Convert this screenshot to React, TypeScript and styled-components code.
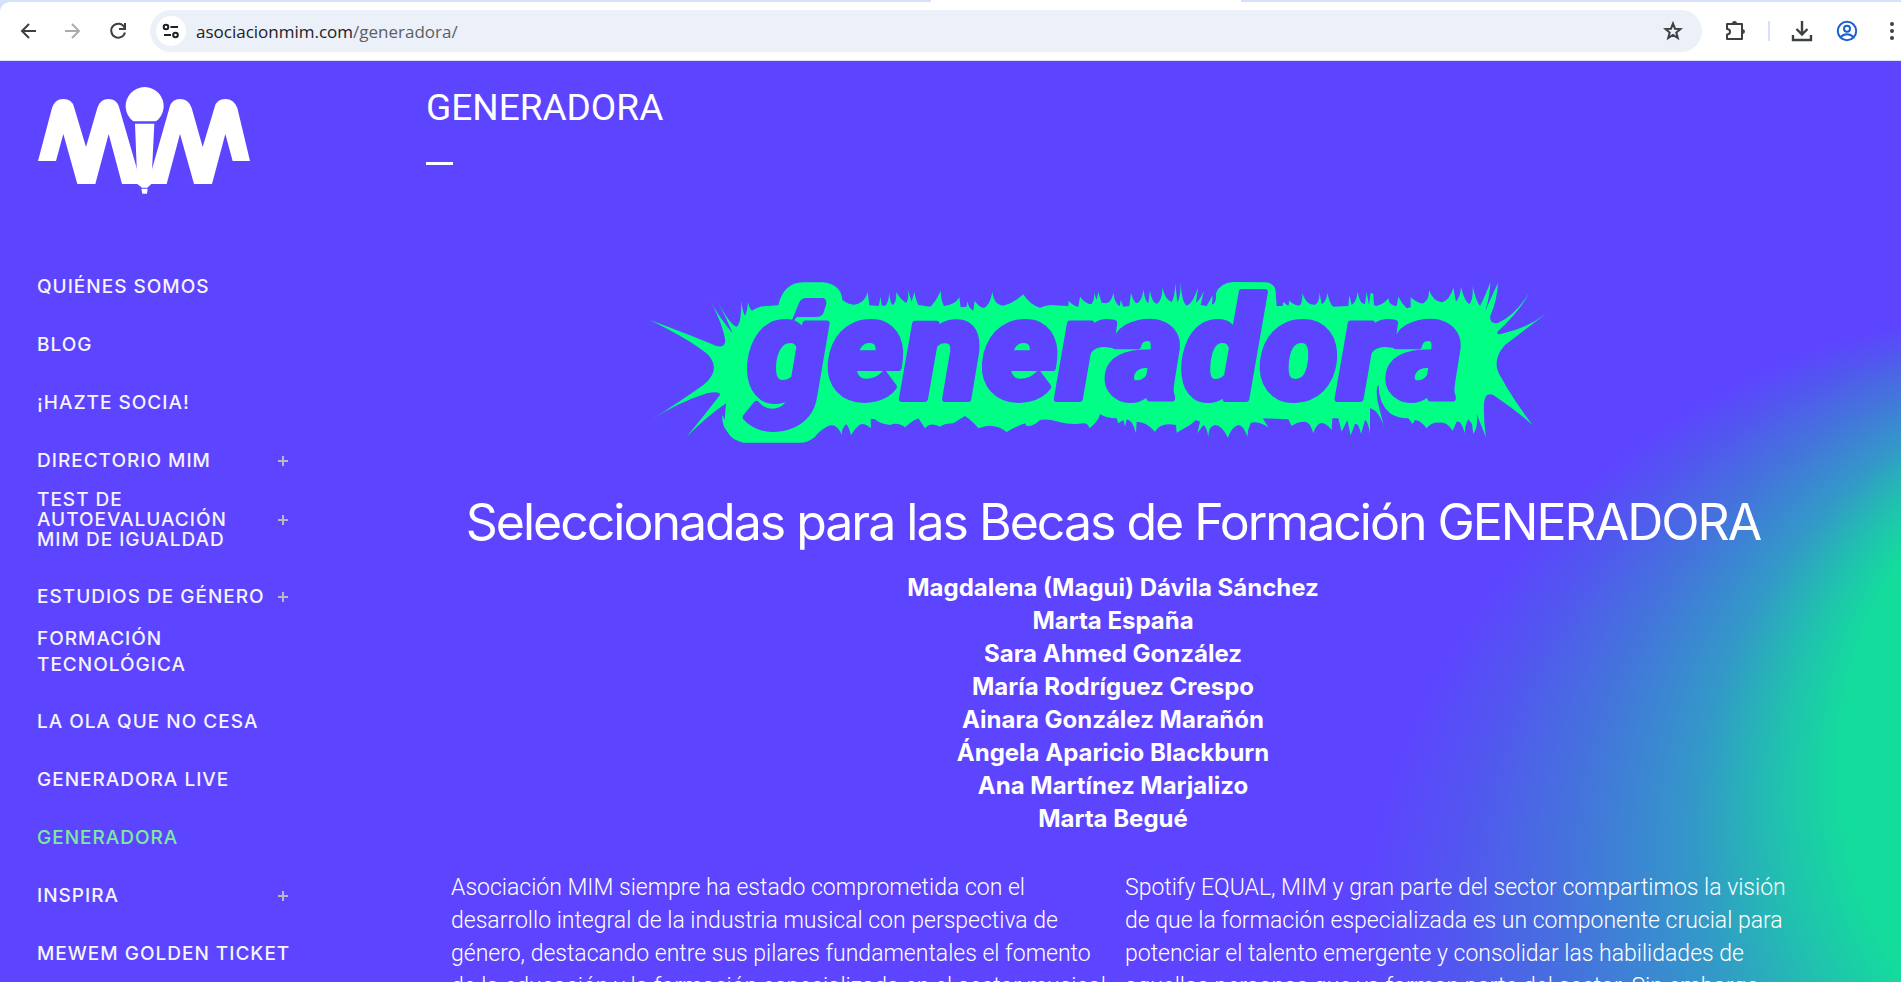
import React from "react";
import styled, { createGlobalStyle } from "styled-components";

const violet = "#5d44ff";
const mint = "#00ff85";

const GlobalStyle = createGlobalStyle`
  *, *::before, *::after { box-sizing: border-box; }
  html, body, #root { height: 100%; }
  body { margin: 0; overflow: hidden; background: ${violet}; color: #fff; font-family: Inter, "Liberation Sans", sans-serif; }
`;

const Screen = styled.div`
  display: flex;
  flex-direction: column;
  height: 100vh;
  overflow: hidden;
`;

const Chrome = styled.header`
  flex: none;
  background: #d6e2fb;
`;

const ActiveTab = styled.div`
  width: 310px;
  height: 2px;
  margin-left: 49%;
  background: #fff;
`;

const Toolbar = styled.div`
  height: 59px;
  display: flex;
  align-items: center;
  margin-right: -14px;
  padding: 0 0 1px 14px;
  background: #fff;
  border-bottom: 1px solid #dfe3f5;
  border-radius: 10px 0 0 0;
`;

const ToolButton = styled.button<{ $tone?: string; $width: number }>`
  flex: none;
  width: ${(p) => p.$width}px;
  height: 40px;
  padding: 0;
  border: 0;
  background: none;
  color: ${(p) => p.$tone ?? "#3c4043"};
  display: flex;
  align-items: center;
  justify-content: center;
`;

const AddressBar = styled.div`
  flex: 1;
  height: 42px;
  margin-left: 17px;
  padding: 0 6px;
  display: flex;
  align-items: center;
  border-radius: 21px;
  background: #ebf0f9;
`;

const SiteButton = styled.button`
  width: 30px;
  height: 30px;
  padding: 0;
  border: 0;
  border-radius: 50%;
  background: #fff;
  color: #1f2023;
  display: flex;
  align-items: center;
  justify-content: center;
`;

const Url = styled.a`
  flex: 1;
  margin-left: 10px;
  padding-top: 2px;
  font: 17px/24px "Open Sans", "Noto Sans", sans-serif;
  color: #202124;
  text-decoration: none;
  span { color: #5b5f66; }
`;

const Divider = styled.span`
  width: 2px;
  height: 20px;
  margin-right: 9px;
  background: #d6e2fb;
`;

const Site = styled.div`
  position: relative;
  flex: 1;
  min-height: 0;
  display: flex;
  overflow: hidden;
`;

const Glow = styled.svg`
  position: absolute;
  top: 0;
  right: 0;
  width: 601px;
  height: 921px;
`;

const Sidebar = styled.aside`
  position: relative;
  flex: none;
  width: 426px;
  padding: 26px 136px 0 37px;
`;

const Logo = styled.a`
  display: block;
  width: 214px;
  height: 108px;
  margin-bottom: 63px;
  svg { display: block; }
`;

const NavList = styled.ul`
  margin: 0;
  padding: 0;
  list-style: none;
`;

const NavItem = styled.li<{ $kind?: "tight" | "loose" }>`
  display: flex;
  justify-content: space-between;
  align-items: center;
  padding: ${(p) => (p.$kind === "tight" ? "0 0 18px" : p.$kind === "loose" ? "0 0 15px" : "19px 0")};
  line-height: ${(p) => (p.$kind === "loose" ? 26 : 20)}px;
`;

const NavLink = styled.a<{ $active?: boolean }>`
  font-size: 19px;
  font-weight: 500;
  letter-spacing: 1px;
  color: ${(p) => (p.$active ? "#7eea9f" : "#f6f4ff")};
  text-decoration: none;
  white-space: pre;
`;

const Expand = styled.button`
  flex: none;
  width: 14px;
  height: 14px;
  padding: 2px;
  border: 0;
  background: none;
  svg { display: block; }
`;

const Main = styled.main`
  position: relative;
  flex: 1;
  min-width: 0;
`;

const Title = styled.h1`
  margin: 0;
  padding-top: 25px;
  font: 400 37px/44px Roboto, sans-serif;
`;

const Rule = styled.div`
  width: 27px;
  height: 3px;
  margin-top: 32px;
  background: #fff;
`;

const Banner = styled.svg`
  display: block;
  width: 920px;
  height: 180px;
  margin: 105px 0 0 214px;
  overflow: visible;
`;

const Wordmark = styled.text`
  font: italic 900 430px Roboto, sans-serif;
  fill: ${violet};
  stroke: ${violet};
  stroke-width: 18px;
  stroke-linejoin: round;
`;

const Content = styled.section`
  padding: 0 126px 0 25px;
`;

const Heading = styled.h2`
  margin: 39px 0 16px;
  font-size: 50px;
  line-height: 66px;
  font-weight: 400;
  letter-spacing: -2px;
  text-align: center;
  white-space: nowrap;
`;

const Names = styled.ul`
  margin: 0 0 36px;
  padding: 0;
  list-style: none;
  text-align: center;
  font-size: 24px;
  line-height: 33px;
  font-weight: 700;
`;

const Columns = styled.div`
  display: grid;
  grid-template-columns: repeat(2, minmax(0, 1fr));
  column-gap: 24px;
`;

const Paragraph = styled.p`
  margin: 0;
  font: 300 23px/33px Roboto, sans-serif;
  white-space: pre;
`;

type Item = { label: string; more?: boolean; active?: boolean; kind?: "tight" | "loose" };

const items: Item[] = [
  { label: "QUIÉNES SOMOS" },
  { label: "BLOG" },
  { label: "¡HAZTE SOCIA!" },
  { label: "DIRECTORIO MIM", more: true },
  { label: "TEST DE\nAUTOEVALUACIÓN\nMIM DE IGUALDAD", more: true, kind: "tight" },
  { label: "ESTUDIOS DE GÉNERO", more: true },
  { label: "FORMACIÓN\nTECNOLÓGICA", kind: "loose" },
  { label: "LA OLA QUE NO CESA" },
  { label: "GENERADORA LIVE" },
  { label: "GENERADORA", active: true },
  { label: "INSPIRA", more: true },
  { label: "MEWEM GOLDEN TICKET" },
];

const names = [
  "Magdalena (Magui) Dávila Sánchez",
  "Marta España",
  "Sara Ahmed González",
  "María Rodríguez Crespo",
  "Ainara González Marañón",
  "Ángela Aparicio Blackburn",
  "Ana Martínez Marjalizo",
  "Marta Begué",
];

const left = `Asociación MIM siempre ha estado comprometida con el
desarrollo integral de la industria musical con perspectiva de
género, destacando entre sus pilares fundamentales el fomento
de la educación y la formación especializada en el sector musical`;

const right = `Spotify EQUAL, MIM y gran parte del sector compartimos la visión
de que la formación especializada es un componente crucial para
potenciar el talento emergente y consolidar las habilidades de
aquellas personas que ya forman parte del sector. Sin embargo`;

const splash =
  "M30 150Q150 195 215 222Q250 240 256 215Q250 165 208 88Q235 140 278 190Q262 150 232 92Q270 165 290 170Q305 160 303 92Q308 125 315 137Q322 125 324 97Q330 120 336 122Q360 108 378 108L415 106Q430 38 490 37L550 37Q605 45 607 90Q640 115 665 95Q678 85 683 66L688 106L716 108L722 80L725 106L735 108Q745 100 748 68Q750 95 757 105Q770 100 769 66Q785 95 800 98Q808 85 803 58L815 95L823 66Q828 92 835 105L870 110Q885 100 902 62Q902 90 912 108Q945 105 958 82L962 112L980 110L982 92Q985 115 1000 122L1004 92Q1015 110 1032 114Q1050 105 1057 66Q1062 105 1090 107Q1120 100 1150 73Q1170 105 1200 113Q1225 103 1240 106L1285 108L1286 92Q1300 108 1315 110L1320 80Q1340 105 1355 102Q1365 90 1362 68L1370 90L1375 66L1385 98L1400 100Q1415 95 1420 68Q1425 105 1440 108L1442 90L1450 110L1468 108L1473 68Q1480 98 1492 100Q1508 90 1510 58Q1515 95 1525 100L1530 62Q1535 95 1550 102Q1568 90 1567 52Q1575 90 1595 97Q1605 80 1606 40L1612 98Q1622 80 1622 38Q1625 95 1640 107Q1660 100 1674 52L1668 98Q1680 90 1692 62L1682 105L1700 108L1718 76L1716 104Q1730 100 1728 70Q1740 38 1780 36L1880 37Q1906 42 1907 65L1910 108L1928 108L1930 95L1945 108L1948 92Q1965 108 1980 106Q1988 95 1987 70Q2000 108 2025 104Q2040 95 2038 66L2045 102Q2060 95 2062 68Q2070 105 2080 110L2125 108L2128 75L2135 105Q2150 95 2153 65Q2160 105 2175 102L2180 66L2187 105L2192 68L2200 72L2202 106L2210 108Q2235 100 2245 85Q2248 108 2270 108L2275 80Q2285 100 2300 115L2312 112L2312 82Q2335 102 2350 100Q2368 90 2367 60Q2380 95 2405 97Q2430 90 2440 53L2448 95Q2460 85 2463 52Q2475 98 2488 102Q2500 90 2498 48Q2508 95 2520 108Q2535 80 2551 37Q2550 80 2535 125Q2550 90 2574 38Q2572 90 2550 140Q2552 165 2575 158Q2620 140 2667 70Q2635 130 2572 185Q2570 198 2590 190Q2660 175 2720 130Q2640 190 2595 225Q2550 275 2585 325Q2620 390 2678 465Q2620 415 2560 375Q2535 365 2532 400Q2530 450 2538 502L2510 432Q2515 470 2500 492L2496 462L2485 448Q2475 465 2474 490Q2465 450 2450 455L2438 482Q2420 455 2400 458Q2375 455 2360 475Q2340 450 2325 450L2318 462L2305 445Q2270 445 2250 430Q2215 400 2216 345Q2206 350 2213 395L2232 470Q2215 420 2190 415L2190 492Q2185 455 2175 450L2163 492Q2155 455 2145 462L2132 496L2122 450L2105 485L2095 445L2077 445L2075 480Q2055 455 2040 460Q2025 470 2020 490Q2010 455 1995 455Q1970 455 1955 468L1945 448L1868 445L1885 472Q1850 450 1832 460Q1822 480 1822 500Q1810 465 1795 465Q1775 470 1764 503Q1745 465 1725 465Q1705 470 1705 500Q1700 470 1690 465L1672 490L1680 455L1668 450L1650 465L1610 488L1608 465Q1560 455 1545 485Q1520 455 1490 455L1488 490Q1478 450 1460 448L1455 470L1450 450L1435 460L1430 445Q1400 445 1380 432Q1375 455 1348 475Q1345 460 1330 460Q1290 465 1255 455Q1220 445 1200 450Q1180 470 1160 468L1155 460Q1125 470 1100 486Q1060 455 1015 475Q1000 455 975 438Q955 450 940 460Q915 460 900 470Q870 455 855 475L835 445Q820 450 795 472Q775 455 750 465Q715 460 705 448L692 446L693 475Q670 455 658 465Q645 475 633 495Q625 465 618 463Q605 475 605 495Q590 455 560 470Q535 485 525 500Q505 518 480 518L310 518Q275 510 265 490L252 470Q244 445 248 435L254 450L258 400Q200 440 140 500Q190 440 240 375Q240 362 200 370Q110 400 32 450Q120 395 190 345Q245 300 205 255Q160 215 30 150Z";

const line = { fill: "none", stroke: "currentColor", strokeWidth: 2 } as const;

export default function App() {
  return (
    <Screen>
      <GlobalStyle />
      <Chrome>
        <ActiveTab />
        <Toolbar>
          <ToolButton aria-label="Atrás" $width={28}>
            <svg width="18" height="18" viewBox="0 0 18 18" {...line}><path d="M17 9H3M10 2L3 9l7 7" /></svg>
          </ToolButton>
          <ToolButton aria-label="Adelante" $tone="#a9abae" $width={61}>
            <svg width="18" height="18" viewBox="0 0 18 18" {...line}><path d="M1 9h14M8 2l7 7-7 7" /></svg>
          </ToolButton>
          <ToolButton aria-label="Recargar" $width={30}>
            <svg width="18" height="18" viewBox="0 0 18 18" {...line}><path d="M15.500 5.500A7 7 0 1 0 16 10.500M16 1v6h-6" /></svg>
          </ToolButton>
          <AddressBar>
            <SiteButton aria-label="Información del sitio">
              <svg width="18" height="18" viewBox="0 0 18 18" {...line}><circle cx="4" cy="5" r="2.300" /><path d="M8.500 5H16M2 13h7" /><circle cx="13.500" cy="13" r="2.300" /></svg>
            </SiteButton>
            <Url href="#">asociacionmim.com<span>/generadora/</span></Url>
            <ToolButton aria-label="Favoritos" $width={46}>
              <svg width="20" height="20" viewBox="0 0 20 20" {...line}><path d="M10 2.500l2 5.200 5.600.3-4.300 3.500 1.500 5.500L10 14l-4.800 3 1.500-5.500L2.400 8l5.600-.3z" /></svg>
            </ToolButton>
          </AddressBar>
          <ToolButton aria-label="Extensiones" $width={66}>
            <svg width="22" height="22" viewBox="0 0 22 22" {...line}><path d="M3 4h15v15H3v-4.500c4 0 4-5.500 0-5.500z" strokeLinejoin="round" /><path d="M8 3.500a2.500 2.500 0 0 1 5 0zM18.500 9a2.500 2.500 0 0 1 0 5z" fill="currentColor" stroke="none" /></svg>
          </ToolButton>
          <Divider />
          <ToolButton aria-label="Descargas" $width={46}>
            <svg width="22" height="22" viewBox="0 0 22 22" {...line} strokeWidth={2.400}><path d="M11 1v13M5.500 9l5.500 5.500L16.500 9M2 15v5h18v-5" /></svg>
          </ToolButton>
          <ToolButton aria-label="Perfil" $tone="#1a5fd0" $width={44}>
            <svg width="22" height="22" viewBox="0 0 22 22" {...line}><circle cx="11" cy="11" r="9.200" /><circle cx="11" cy="8.800" r="3" /><path d="M4.500 17.200c3.500-4 9.500-4 13 0" /></svg>
          </ToolButton>
          <ToolButton aria-label="Menú" $width={46}>
            <svg width="4" height="20" viewBox="0 0 4 20" fill="currentColor"><circle cx="2" cy="3" r="2" /><circle cx="2" cy="10" r="2" /><circle cx="2" cy="17" r="2" /></svg>
          </ToolButton>
        </Toolbar>
      </Chrome>

      <Site>
        <Glow viewBox="1300 61 601 921" aria-hidden="true">
          <defs>
            <radialGradient id="glow" gradientUnits="userSpaceOnUse" cx="2045" cy="1002" r="692" fx="2223" fy="765" fr="380">
              <stop offset="0" stopColor="#14dc9c" />
              <stop offset="0.12" stopColor="#1fc4ad" />
              <stop offset="0.3" stopColor="#3399c8" />
              <stop offset="0.55" stopColor="#4474dc" />
              <stop offset="0.8" stopColor="#5256f0" />
              <stop offset="1" stopColor={violet} />
            </radialGradient>
          </defs>
          <rect x="1300" y="61" width="601" height="921" fill="url(#glow)" />
        </Glow>

        <Sidebar>
          <Logo href="#" aria-label="MIM">
            <svg width="214" height="108" viewBox="111 262 642 324" fill="#fff">
              <path d="M114 484L156 325Q164 298 190 298Q216 298 222 322L258 442L292 325Q300 298 326 298Q350 298 357 322L412 512L415 553H366L326 403L286 553H232L190 403L168 484Z" />
              <path d="M750 484L712 325Q702 298 676 298Q650 298 644 322L608 442L575 325Q566 298 540 298Q516 298 509 322L455 512L450 553H500L540 403L582 553H636L676 403L698 484Z" />
              <path d="M400 365A57 57 0 1 1 468 365Z" />
              <path d="M405 372H463L454 553L442 564H426L412 553Z" />
              <path d="M424 567H443L441 582H427Z" />
            </svg>
          </Logo>
          <nav aria-label="Principal">
            <NavList>
              {items.map((item) => (
                <NavItem key={item.label} $kind={item.kind}>
                  <NavLink href="#" $active={item.active}>{item.label}</NavLink>
                  {item.more && (
                    <Expand aria-label={"Abrir " + item.label}>
                      <svg width="10" height="10" viewBox="0 0 10 10"><path d="M5 0v10M0 5h10" stroke="#b9b7c6" strokeWidth="2" /></svg>
                    </Expand>
                  )}
                </NavItem>
              ))}
            </NavList>
          </nav>
        </Sidebar>

        <Main>
          <Title>GENERADORA</Title>
          <Rule />
          <Banner viewBox="0 0 2760 540">
            <path d={splash} fill={mint} />
            <path d="M450 165L478 97Q484 84 500 84H550Q562 88 558 106L550 130Q545 141 530 141H472Q462 145 460 165Z" fill={violet} />
            <Wordmark x="322" y="388">generadora</Wordmark>
          </Banner>
          <Content>
            <Heading>Seleccionadas para las Becas de Formación GENERADORA</Heading>
            <Names>{names.map((n) => <li key={n}>{n}</li>)}</Names>
            <Columns>
              <Paragraph>{left}</Paragraph>
              <Paragraph>{right}</Paragraph>
            </Columns>
          </Content>
        </Main>
      </Site>
    </Screen>
  );
}
